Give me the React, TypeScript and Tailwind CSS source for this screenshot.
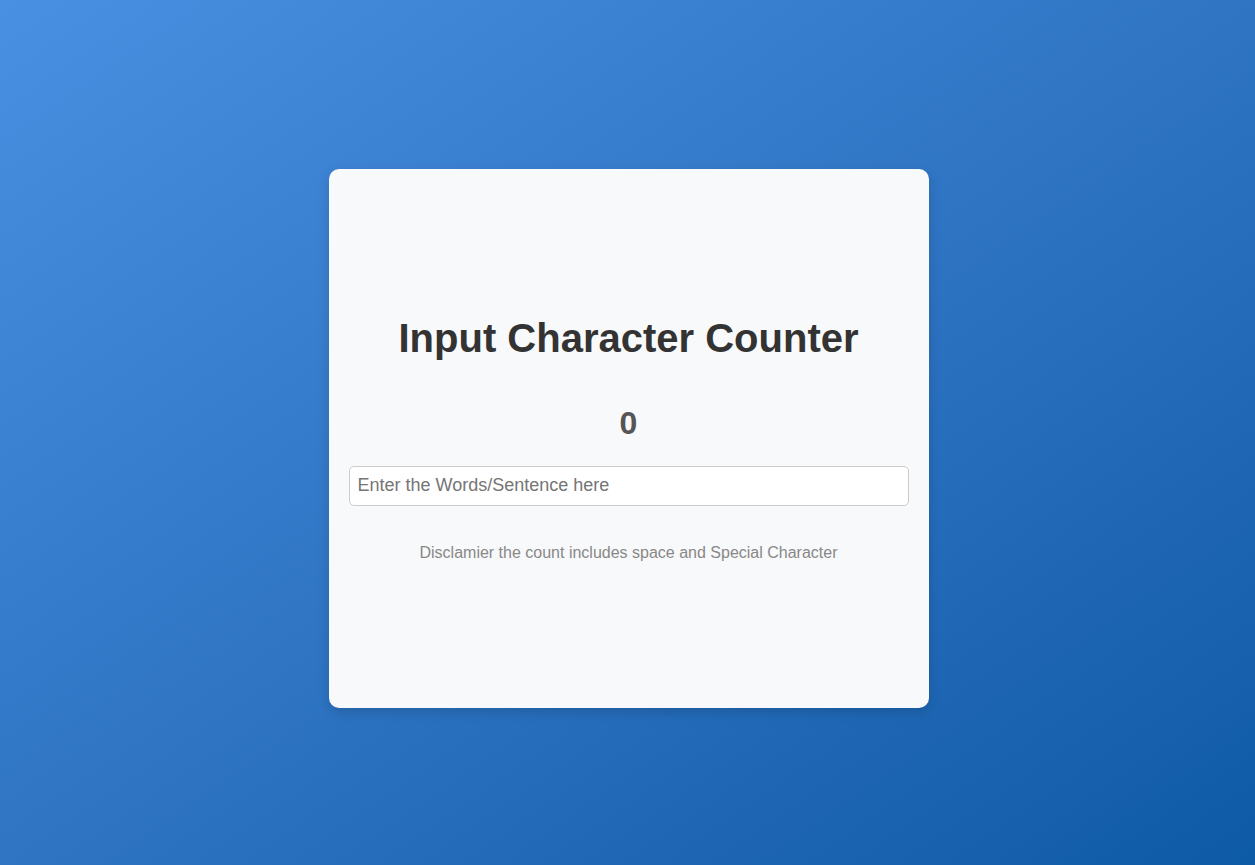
import { useState } from "react";

const App = () => {
  const [text, setText] = useState("");

  return (
    <div
      className="flex h-screen w-full items-center justify-center bg-gradient-to-br from-[#4a90e2] to-[#0d5aa6] pt-3 pl-[2px]"
      style={{ fontFamily: '"Liberation Sans", Arial, sans-serif' }}
    >
      {/* Card */}
      <div className="flex h-[539px] w-[600px] flex-col items-center justify-center rounded-[10px] bg-[#f8f9fa] p-5 shadow-[0_4px_12px_rgba(0,0,0,0.15)]">
        <h1 className="mb-[44px] text-[40px] leading-[45px] font-bold text-[#333]">
          Input Character Counter
        </h1>
        <p className="mb-[25px] text-[32px] leading-[36px] font-bold text-[#555]">
          {text.length}
        </p>
        <input
          type="text"
          value={text}
          onChange={(e) => setText(e.target.value)}
          placeholder="Enter the Words/Sentence here"
          className="mb-[38px] h-10 w-full rounded-[5px] border border-[#ccc] bg-white px-2 text-[18px] text-[#333] outline-none placeholder:text-[#757575]"
        />
        <p className="text-[16px] leading-[18px] text-[#888]">
          Disclamier the count includes space and Special Character
        </p>
      </div>
    </div>
  );
};

export default App;
